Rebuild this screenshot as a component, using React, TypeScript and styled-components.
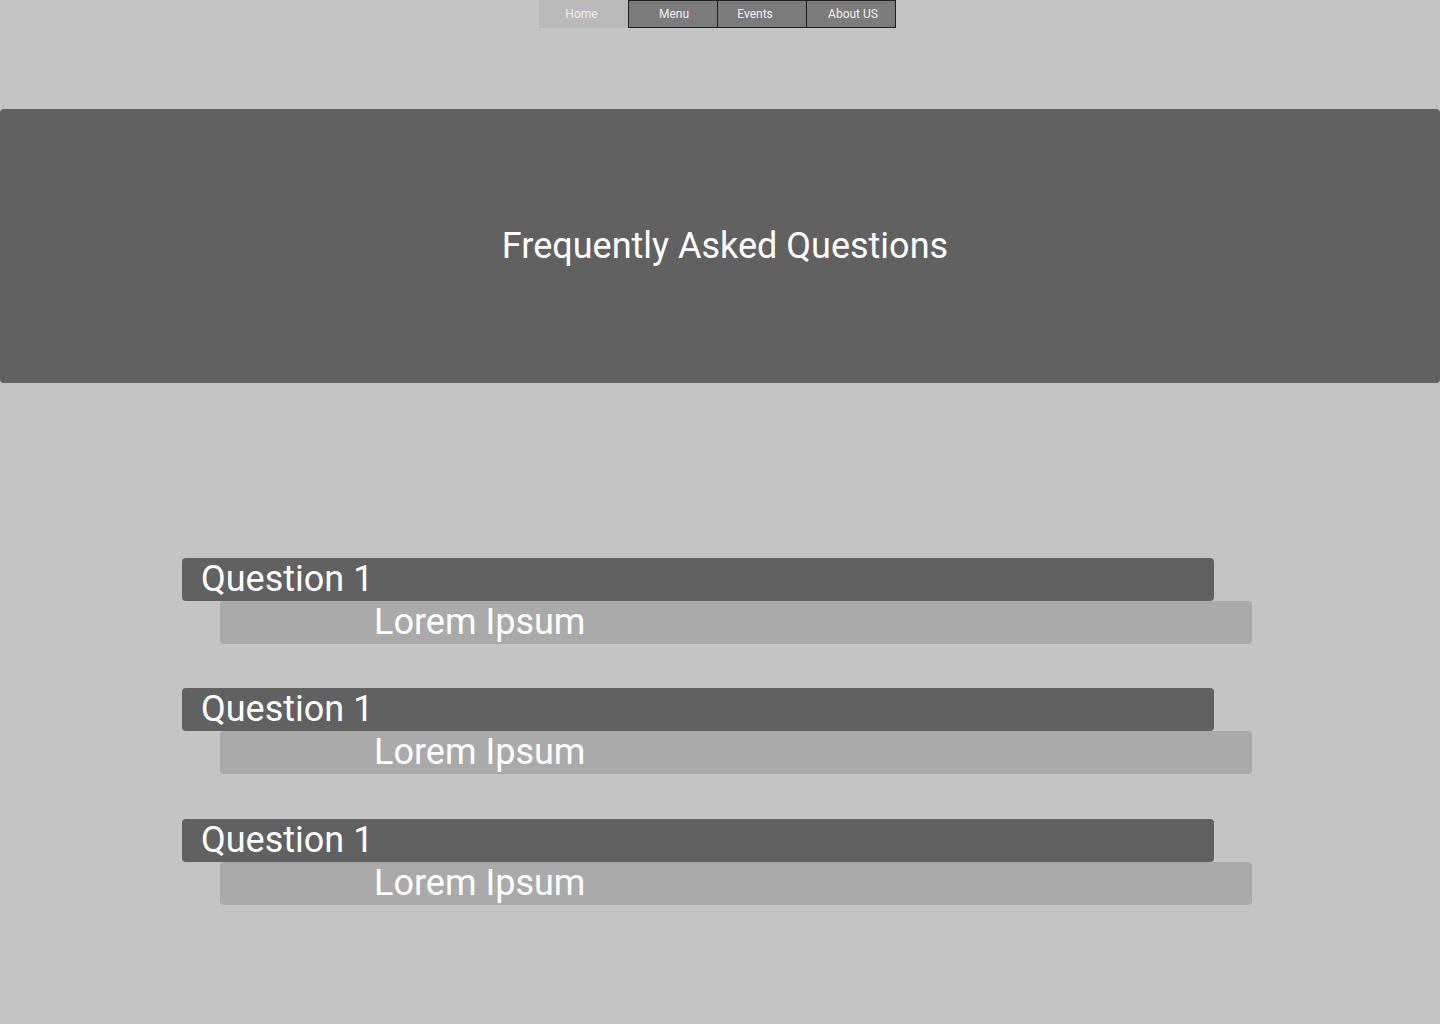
import React from "react";
import styled, { createGlobalStyle } from "styled-components";

const GlobalStyle = createGlobalStyle`
  html, body {
    margin: 0;
    padding: 0;
    background: #c4c4c4;
    font-family: Roboto, "Liberation Sans", Arial, sans-serif;
  }
  * { box-sizing: border-box; }
`;

const Page = styled.div`
  min-height: 1024px;
  background: #c4c4c4;
  display: flex;
  flex-direction: column;
`;

const Nav = styled.nav`
  display: flex;
  padding-left: 539px;
  height: 28px;
`;

const NavItem = styled.a<{ $active?: boolean; $shift?: number }>`
  display: flex;
  align-items: center;
  justify-content: center;
  width: ${(p) => (p.$active ? "89px" : "90px")};
  height: 28px;
  font-size: 12px;
  color: ${(p) => (p.$active ? "#f0f0f0" : "#f2f2f2")};
  background: ${(p) => (p.$active ? "#b9b9b9" : "#7b7b7b")};
  border: ${(p) => (p.$active ? "none" : "1px solid #1e1e1e")};
  margin-left: ${(p) => (p.$active ? "0" : "-1px")};
  &:nth-child(2) { margin-left: 0; }
  text-decoration: none;
  padding-left: ${(p) => Math.max(0, (p.$shift ?? 0) * 2)}px;
  padding-right: ${(p) => Math.max(0, -(p.$shift ?? 0) * 2)}px;
`;

const Hero = styled.header`
  margin-top: 81px;
  height: 274px;
  background: #616161;
  border-radius: 4px;
  display: flex;
  align-items: center;
  justify-content: center;
  padding-left: 10px;
`;

const HeroTitle = styled.h1`
  margin: 0;
  font-size: 36px;
  font-weight: 400;
  color: #ffffff;
  line-height: 43px;
`;

const FaqList = styled.section`
  margin-top: 175px;
  display: flex;
  flex-direction: column;
  gap: 44.4px;
  padding-left: 182px;
`;

const FaqItem = styled.div`
  display: flex;
  flex-direction: column;
`;

const Question = styled.div`
  width: 1032px;
  height: 43px;
  background: #616161;
  border-radius: 4px;
  padding-left: 19px;
  font-size: 36px;
  line-height: 43px;
  color: #ffffff;
`;

const Answer = styled.div`
  margin-left: 38px;
  width: 1032px;
  height: 43px;
  background: #aaaaaa;
  border-radius: 4px;
  padding-left: 154px;
  font-size: 36px;
  line-height: 43px;
  color: #ffffff;
`;

const items = [
  { q: "Question 1", a: "Lorem Ipsum" },
  { q: "Question 1", a: "Lorem Ipsum" },
  { q: "Question 1", a: "Lorem Ipsum" },
];

export default function App() {
  return (
    <>
      <GlobalStyle />
      <Page>
        <Nav>
          <NavItem $active $shift={-2}>Home</NavItem>
          <NavItem $shift={1}>Menu</NavItem>
          <NavItem $shift={-7}>Events</NavItem>
          <NavItem $shift={2}>About US</NavItem>
        </Nav>
        <Hero>
          <HeroTitle>Frequently Asked Questions</HeroTitle>
        </Hero>
        <FaqList>
          {items.map((it, i) => (
            <FaqItem key={i}>
              <Question>{it.q}</Question>
              <Answer>{it.a}</Answer>
            </FaqItem>
          ))}
        </FaqList>
      </Page>
    </>
  );
}
